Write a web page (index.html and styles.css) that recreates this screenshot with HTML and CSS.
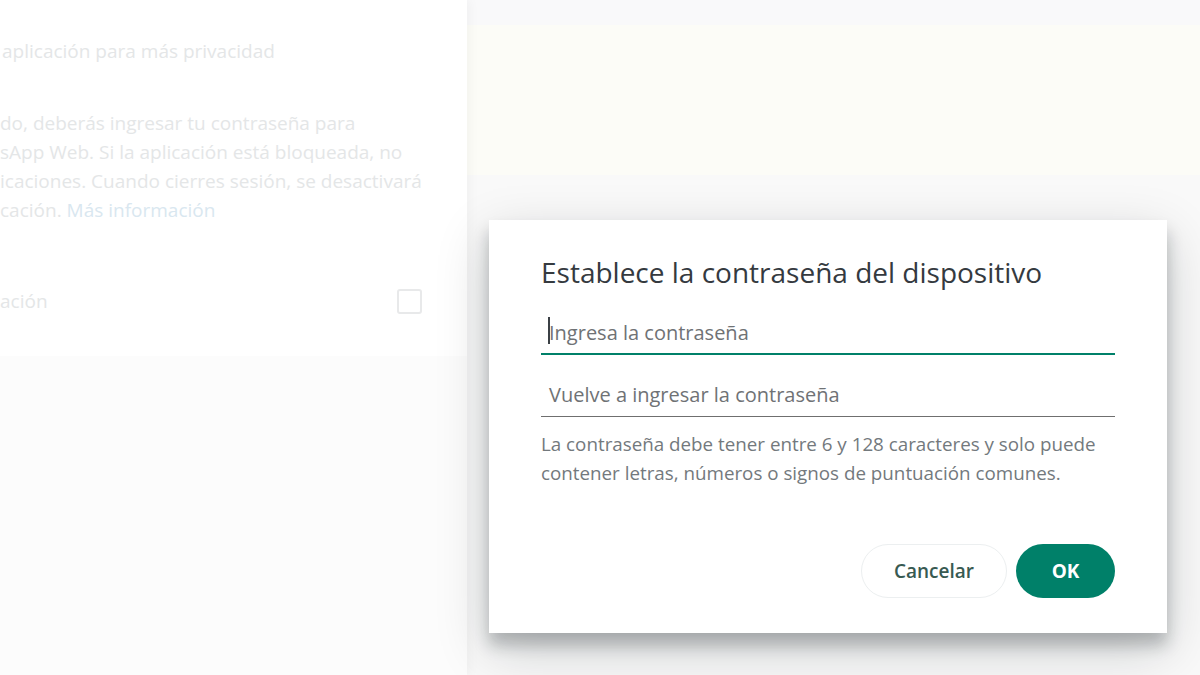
FILE: index.html
```html
<!DOCTYPE html>
<html lang="es">
<head>
<meta charset="utf-8">
<title>Establece la contraseña del dispositivo</title>
<link rel="stylesheet" href="styles.css">
</head>
<body>
<div class="app">
  <aside class="settings">
    <div class="settings-top">
      <div class="subtitle">aplicación para más privacidad</div>
      <div class="desc">
        <div class="line">do, deberás ingresar tu contraseña para</div>
        <div class="line">sApp Web. Si la aplicación está bloqueada, no</div>
        <div class="line">icaciones. Cuando cierres sesión, se desactivará</div>
        <div class="line">cación. <span class="link">Más información</span></div>
      </div>
      <div class="option">
        <span class="option-label">ación</span>
        <span class="checkbox"></span>
      </div>
    </div>
    <div class="settings-bottom"></div>
  </aside>
  <main class="intro">
    <div class="intro-header"></div>
    <div class="intro-band"></div>
    <div class="intro-rest"></div>
  </main>
</div>

<div class="dialog" role="dialog">
  <h1 class="dialog-title">Establece la contraseña del dispositivo</h1>
  <div class="field field-active">
    <span class="caret"></span>
    <span class="placeholder">Ingresa la contraseña</span>
  </div>
  <div class="field">
    <span class="placeholder">Vuelve a ingresar la contraseña</span>
  </div>
  <p class="hint">La contraseña debe tener entre 6 y 128 caracteres y solo puede contener letras, números o signos de puntuación comunes.</p>
  <div class="actions">
    <button class="btn btn-secondary">Cancelar</button>
    <button class="btn btn-primary">OK</button>
  </div>
</div>
</body>
</html>
```
FILE: styles.css
```css
* { box-sizing: border-box; }
html, body {
  margin: 0;
  padding: 0;
  width: 1200px;
  height: 675px;
  overflow: hidden;
  background: #ffffff;
  font-family: "Open Sans", "Noto Sans", "Liberation Sans", sans-serif;
}
.app {
  display: flex;
  width: 1200px;
  height: 675px;
}
.settings {
  width: 467px;
  flex: none;
  display: flex;
  flex-direction: column;
  background: #ffffff;
  box-shadow: 3px 0 10px rgba(0,0,0,0.04);
  position: relative;
  z-index: 1;
  overflow: hidden;
}
.settings-top {
  height: 356px;
  flex: none;
  padding-top: 37px;
  color: #e4e6e7;
  font-size: 19px;
}
.subtitle {
  line-height: 28px;
  padding-left: 2px;
  white-space: nowrap;
}
.desc {
  margin-top: 44px;
}
.line {
  line-height: 29px;
  white-space: nowrap;
}
.link { color: #d9e7f0; }
.option {
  margin-top: 61px;
  display: flex;
  align-items: center;
  justify-content: space-between;
  padding-right: 45px;
  height: 30px;
}
.option-label { font-size: 19px; }
.checkbox {
  width: 25px;
  height: 25px;
  border: 2px solid #e8e9ea;
  border-radius: 3px;
}
.settings-bottom {
  flex: 1;
  background: #fcfcfc;
}
.intro {
  flex: 1;
  display: flex;
  flex-direction: column;
  background: #f9f9f9;
}
.intro-header { height: 25px; background: #f9f9fa; }
.intro-band { height: 150px; background: #fcfcf7; }
.intro-rest { flex: 1; background: #f9f9f9; }

.dialog {
  position: absolute;
  left: 489px;
  top: 220px;
  width: 678px;
  background: #ffffff;
  padding: 34px 52px 35px 52px;
  box-shadow: 0 17px 50px 0 rgba(11,20,26,0.19), 0 12px 15px 0 rgba(11,20,26,0.24);
  z-index: 5;
}
.dialog-title {
  margin: 0;
  font-size: 28px;
  font-weight: 400;
  line-height: 36px;
  color: #353a3f;
}
.field {
  margin-top: 18px;
  height: 44px;
  border-bottom: 1px solid #6f6f6f;
  display: flex;
  align-items: center;
  padding-left: 8px;
  position: relative;
}
.field-active {
  margin-top: 21px;
  height: 44px;
  border-bottom: 2px solid #008069;
}
.caret {
  position: absolute;
  left: 7px;
  top: 6px;
  width: 2px;
  height: 27px;
  background: #3b4045;
}
.placeholder {
  font-size: 20px;
  color: #6f7275;
}
.hint {
  margin: 13px 0 0 0;
  font-size: 18.8px;
  line-height: 29px;
  color: #73797d;
}
.actions {
  margin-top: 56px;
  display: flex;
  justify-content: flex-end;
  gap: 9px;
}
.btn {
  height: 54px;
  border-radius: 27px;
  font-family: inherit;
  font-size: 19px;
  font-weight: 600;
  cursor: pointer;
}
.btn-secondary {
  width: 146px;
  background: #ffffff;
  border: 1px solid #eceff0;
  color: #385a52;
}
.btn-primary {
  width: 99px;
  background: #008069;
  border: none;
  color: #ffffff;
  font-weight: 700;
}
```
